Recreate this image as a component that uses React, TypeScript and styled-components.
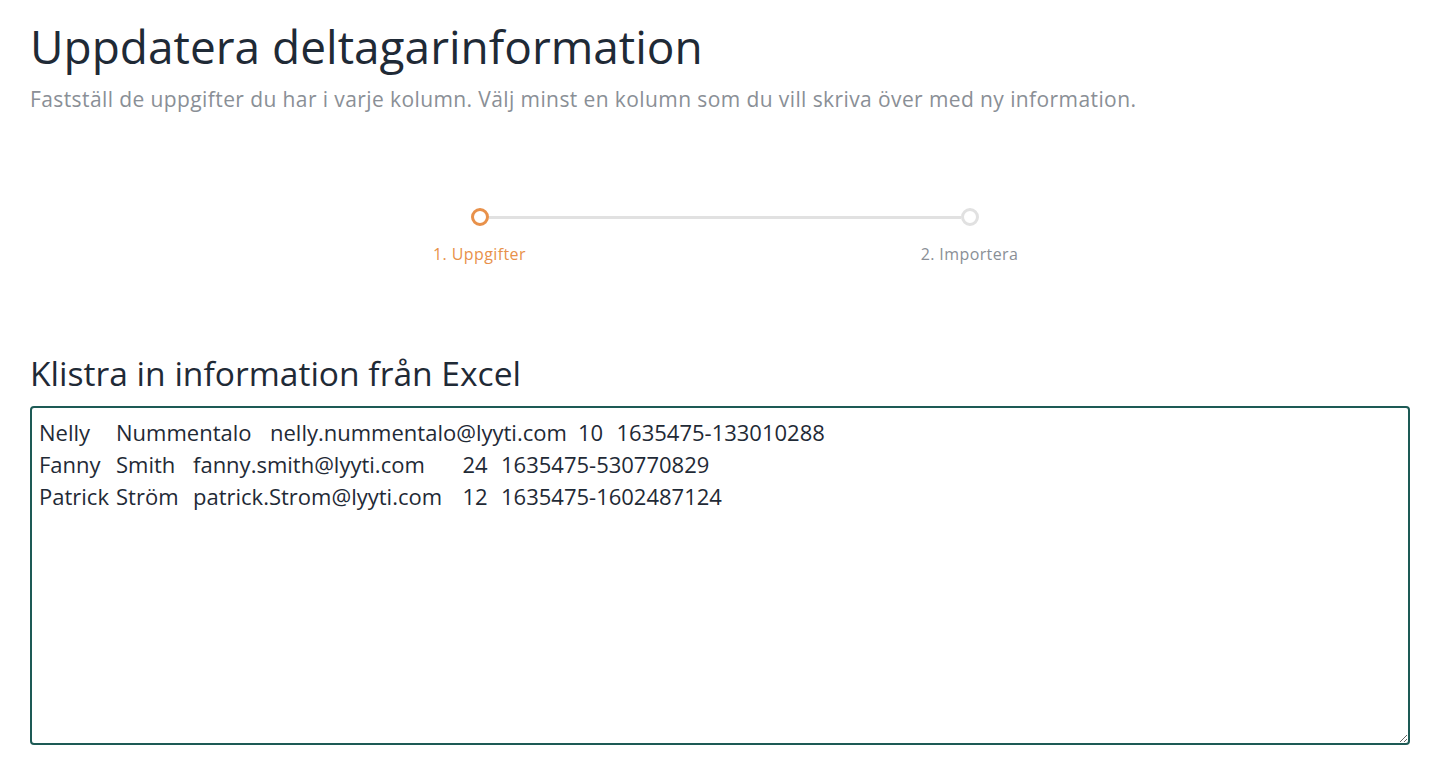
import React from "react";
import styled, { createGlobalStyle } from "styled-components";

const GlobalStyle = createGlobalStyle`
  html, body { margin: 0; padding: 0; background: #ffffff; }
  body { font-family: "Open Sans", "Noto Sans", sans-serif; color: #1f2a36; }
`;

const Page = styled.main`
  padding: 18px 46px 0 30px;
  display: flex;
  flex-direction: column;
`;

const Title = styled.h1`
  margin: 0;
  font-size: 46px;
  font-weight: 400;
  line-height: 56px;
  color: #1f2a36;
`;

const Subtitle = styled.p`
  margin: 13px 0 0;
  font-size: 21px;
  line-height: 24px;
  letter-spacing: 0.4px;
  color: #8a8f96;
`;

const Stepper = styled.div`
  margin: 97px auto 0;
  padding-left: 9px;
  display: flex;
  align-items: flex-start;
  width: 600px;
`;

const Step = styled.div`
  display: flex;
  flex-direction: column;
  align-items: center;
  width: 110px;
  flex-shrink: 0;
`;

const Dot = styled.span<{ $active?: boolean }>`
  width: 18px;
  height: 18px;
  box-sizing: border-box;
  border-radius: 50%;
  border: 3px solid ${(p) => (p.$active ? "#e8914a" : "#e1e1e1")};
  background: #fff;
`;

const Line = styled.span`
  flex: 1;
  height: 3px;
  margin: 7.5px -46px 0;
  background: #e1e1e1;
`;

const StepLabel = styled.span<{ $active?: boolean }>`
  margin-top: 17px;
  font-size: 16px;
  line-height: 22px;
  letter-spacing: 0.4px;
  white-space: nowrap;
  color: ${(p) => (p.$active ? "#e8914a" : "#8a8f96")};
`;

const SectionTitle = styled.h2`
  margin: 88px 0 0;
  font-size: 33.6px;
  font-weight: 400;
  line-height: 40px;
  color: #1f2a36;
`;

const PasteArea = styled.textarea`
  margin-top: 13px;
  box-sizing: border-box;
  width: 100%;
  height: 339px;
  padding: 8px 7px;
  border: 2px solid #1d5a55;
  border-radius: 4px;
  font-family: "Open Sans", "Noto Sans", sans-serif;
  font-size: 22px;
  line-height: 32px;
  color: #1f2a36;
  tab-size: 38.5px;
  resize: both;
  outline: none;
`;

const data =
  "Nelly\tNummentalo\tnelly.nummentalo@lyyti.com\t10\t1635475-133010288\n" +
  "Fanny\tSmith\tfanny.smith@lyyti.com\t24\t1635475-530770829\n" +
  "Patrick\tStröm\tpatrick.Strom@lyyti.com\t12\t1635475-1602487124";

export default function App() {
  return (
    <>
      <GlobalStyle />
      <Page>
        <Title>Uppdatera deltagarinformation</Title>
        <Subtitle>
          Fastställ de uppgifter du har i varje kolumn. Välj minst en kolumn som du vill skriva över med ny information.
        </Subtitle>
        <Stepper>
          <Step>
            <Dot $active />
            <StepLabel $active>1. Uppgifter</StepLabel>
          </Step>
          <Line />
          <Step>
            <Dot />
            <StepLabel>2. Importera</StepLabel>
          </Step>
        </Stepper>
        <SectionTitle>Klistra in information från Excel</SectionTitle>
        <PasteArea defaultValue={data} spellCheck={false} />
      </Page>
    </>
  );
}
